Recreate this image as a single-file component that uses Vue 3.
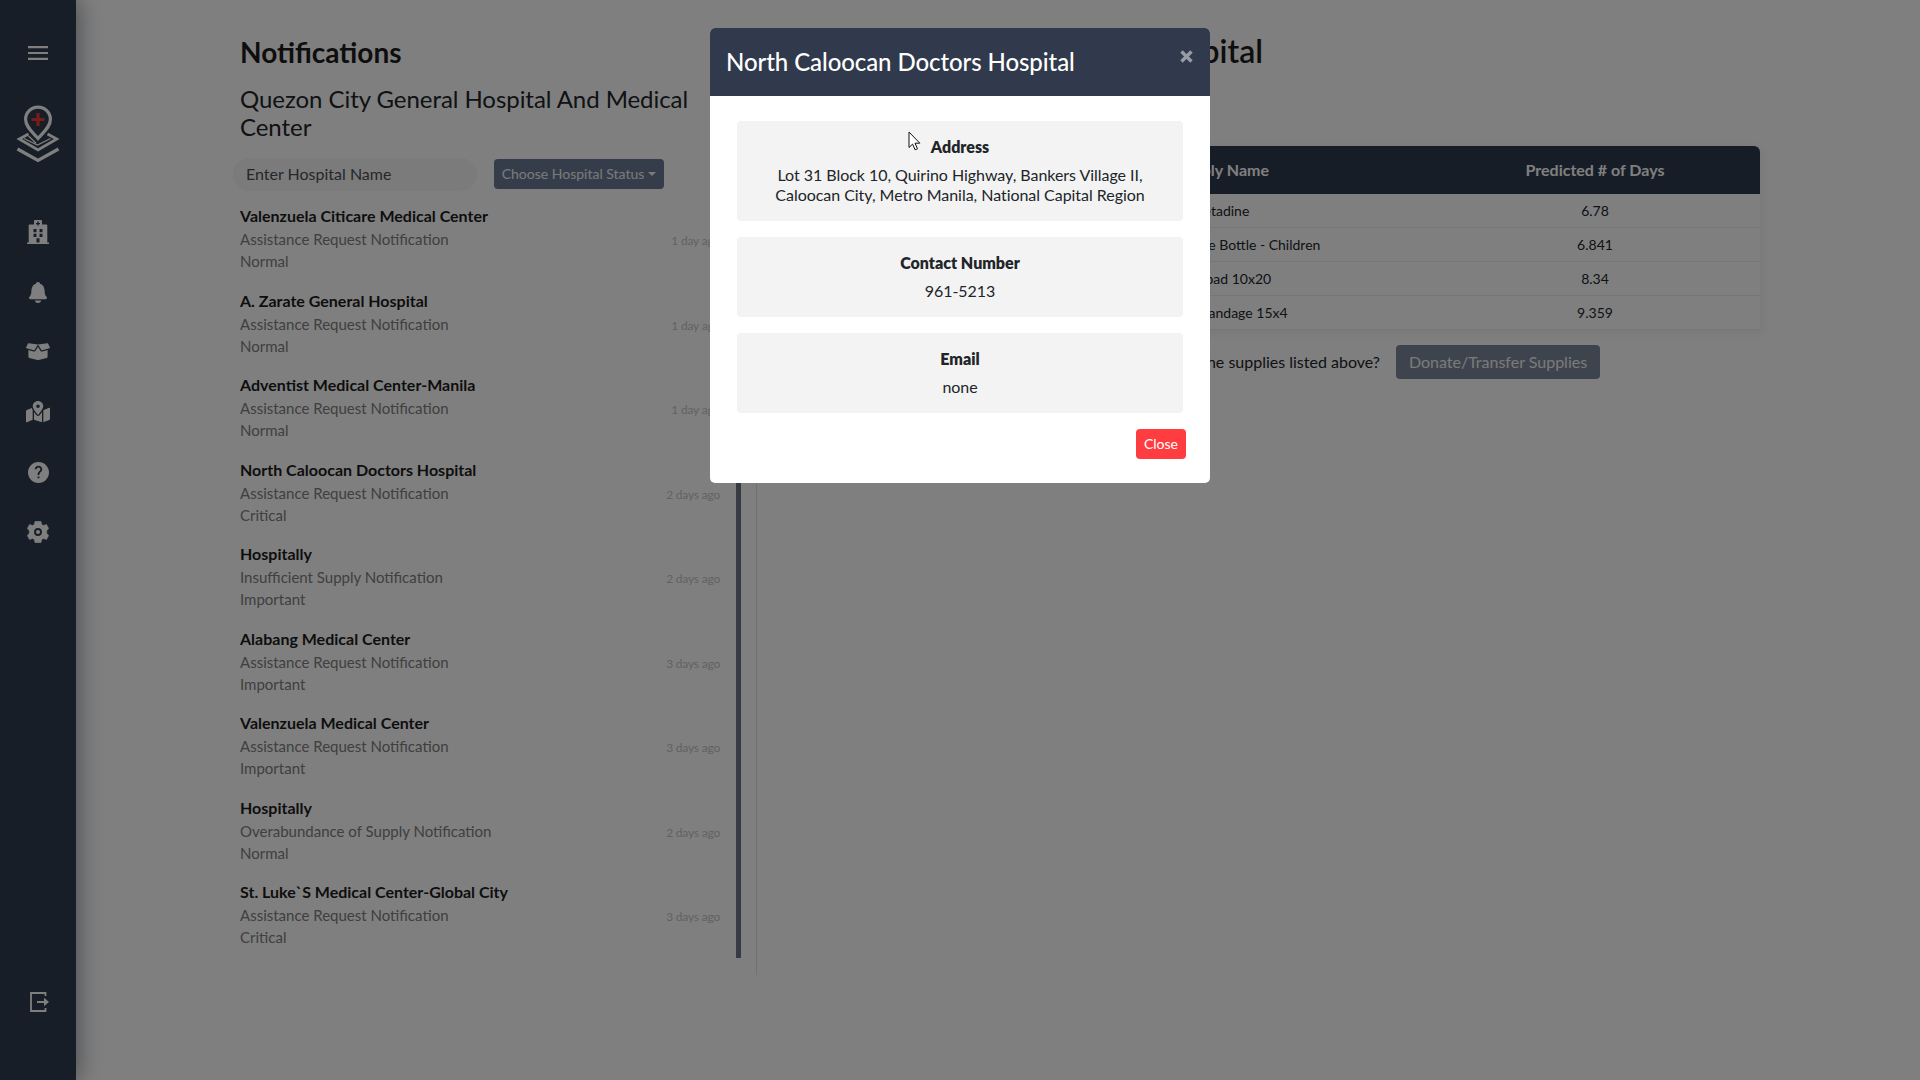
<script setup>
const notifications = [
  { name: 'Valenzuela Citicare Medical Center', type: 'Assistance Request Notification', level: 'Normal', time: '1 day ago' },
  { name: 'A. Zarate General Hospital', type: 'Assistance Request Notification', level: 'Normal', time: '1 day ago' },
  { name: 'Adventist Medical Center-Manila', type: 'Assistance Request Notification', level: 'Normal', time: '1 day ago' },
  { name: 'North Caloocan Doctors Hospital', type: 'Assistance Request Notification', level: 'Critical', time: '2 days ago' },
  { name: 'Hospitally', type: 'Insufficient Supply Notification', level: 'Important', time: '2 days ago' },
  { name: 'Alabang Medical Center', type: 'Assistance Request Notification', level: 'Important', time: '3 days ago' },
  { name: 'Valenzuela Medical Center', type: 'Assistance Request Notification', level: 'Important', time: '3 days ago' },
  { name: 'Hospitally', type: 'Overabundance of Supply Notification', level: 'Normal', time: '2 days ago' },
  { name: 'St. Luke`S Medical Center-Global City', type: 'Assistance Request Notification', level: 'Critical', time: '3 days ago' },
]
const supplies = [
  { name: 'Betadine', days: '6.78' },
  { name: 'Plasma Culture Bottle - Children', days: '6.841' },
  { name: 'ABD pad 10x20', days: '8.34' },
  { name: 'Elastic Bandage 15x4', days: '9.359' },
]
const details = [
  { title: 'Address', lines: ['Lot 31 Block 10, Quirino Highway, Bankers Village II,', 'Caloocan City, Metro Manila, National Capital Region'] },
  { title: 'Contact Number', lines: ['961-5213'] },
  { title: 'Email', lines: ['none'] },
]
</script>

<template>
  <div class="app">
    <nav class="sidebar">
      <div class="slot menu">
        <svg width="20" height="14" viewBox="0 0 20 14"><path d="M0 1.200h20M0 7h20M0 12.800h20" stroke="currentColor" stroke-width="2.200" /></svg>
      </div>
      <div class="slot logo">
        <svg width="44" height="58" viewBox="0 0 44 58" fill="none" stroke="currentColor" stroke-width="3.200">
          <path d="M22 33.500C17 27.500 9.600 22 9.600 14.500a12.400 12.400 0 0 1 24.800 0C34.400 22 27 27.500 22 33.500z" />
          <path d="M12.500 29L3.300 34 22 45l18.700-11-9.200-5" stroke-width="2.800" />
          <path d="M8 33.500l13.500 6.500 13-6.500M12.500 31l7.500 7" stroke-width="1.300" />
          <path d="M1.500 44L22 55.500 42.500 44" />
          <path d="M22 8v13M15.500 14.500h13" stroke="#ee3a34" stroke-width="3.200" />
        </svg>
      </div>
      <div class="slot">
        <svg width="22" height="24" viewBox="0 0 22 24" fill="currentColor" fill-rule="evenodd"><path d="M8 0h6q1 0 1 1v3.500h4.500q.8 0 .8.800V22.500H22V24H0v-1.500h1.700V5.300q0-.8.8-.8H7V1q0-1 1-1zm2.300 1.600v1.300H9v1.400h1.300v1.300h1.400V4.300H13V2.900h-1.300V1.600zM6.500 9v3.200h3V9zm6 0v3.200h3V9zm-6 4.700v3.200h3v-3.200zm6 0v3.200h3v-3.200zm-3 4.600v4.200h3v-4.200z" /></svg>
      </div>
      <div class="slot">
        <svg width="18" height="21" viewBox="0 0 18 21" fill="currentColor"><path d="M9 0c1.300 0 2 .8 2.100 1.700C14.300 2.700 15.500 5.500 15.600 9c.1 3.500.8 4.700 2.100 6 .7.800.2 2.200-1 2.200H1.300c-1.200 0-1.700-1.400-1-2.200C1.600 13.700 2.300 12.500 2.400 9 2.500 5.500 3.700 2.700 6.900 1.700 7 .8 7.700 0 9 0zM5.800 18.500h6.400C11.800 20.200 10.500 21 9 21s-2.800-.8-3.200-2.500z" /></svg>
      </div>
      <div class="slot">
        <svg width="24" height="19.200" viewBox="0 0 640 512" fill="currentColor"><path d="M425.700 256c-16.900 0-32.800-9-41.400-23.400L320 126l-64.200 106.600c-8.700 14.500-24.600 23.500-41.500 23.500-4.500 0-9-.6-13.300-1.900L64 215v178c0 14.700 10 27.500 24.200 31l216.200 54.100c10.200 2.500 20.900 2.500 31 0L551.800 424c14.200-3.600 24.200-16.400 24.200-31V215l-137 39.100c-4.300 1.300-8.800 1.900-13.300 1.900zm212.600-112.200L586.800 41c-3.100-6.200-9.800-9.800-16.700-8.900L320 64l91.700 152.100c3.800 6.300 11.400 9.300 18.500 7.300l197.900-56.500c9.900-2.900 14.700-13.900 10.200-23.100zM53.200 41L1.700 143.800c-4.600 9.200.3 20.200 10.100 23l197.900 56.500c7.100 2 14.700-1 18.500-7.300L320 64 69.800 32.100c-6.900-.8-13.500 2.700-16.600 8.900z" /></svg>
      </div>
      <div class="slot">
        <svg width="24" height="21.400" viewBox="0 0 576 512" fill="currentColor"><path d="M288 0c-69.590 0-126 56.410-126 126 0 56.260 82.350 158.800 113.900 196.020 6.390 7.540 17.820 7.540 24.200 0C331.650 284.800 414 182.260 414 126 414 56.410 357.590 0 288 0zm0 168c-23.200 0-42-18.800-42-42s18.800-42 42-42 42 18.800 42 42-18.800 42-42 42zM20.120 215.950A32.006 32.006 0 0 0 0 245.660v250.320c0 11.320 11.430 19.060 21.940 14.860L160 448V214.920c-8.840-15.980-16.070-31.540-21.250-46.420L20.120 215.950zM288 359.670c-14.070 0-27.380-6.180-36.510-16.960-19.660-23.200-40.570-49.620-59.490-76.720v182l192 64V266c-18.920 27.090-39.820 53.520-59.490 76.720-9.130 10.770-22.440 16.950-36.510 16.950zm266.060-198.510L416 224v288l139.880-55.950A31.996 31.996 0 0 0 576 426.340V176.020c0-11.320-11.430-19.060-21.940-14.860z" /></svg>
      </div>
      <div class="slot">
        <svg width="21" height="21" viewBox="2 2 20 20" fill="currentColor"><path d="M12 2C6.480 2 2 6.480 2 12s4.480 10 10 10 10-4.480 10-10S17.520 2 12 2zm.9 15.500h-1.800v-1.800h1.800v1.800zm1.870-6.550l-.8.820C13.250 12.500 12.900 13.100 12.900 14.300h-1.800v-.5c0-1 .4-1.900 1.050-2.550l1.150-1.150c.35-.34.5-.7.5-1.200 0-1-.8-1.700-1.800-1.700s-1.800.8-1.800 1.800H8.400c0-2 1.600-3.500 3.600-3.500s3.600 1.500 3.600 3.500c0 .8-.3 1.400-.83 1.950z" /></svg>
      </div>
      <div class="slot">
        <svg width="22" height="22" viewBox="0 0 22 22" fill="currentColor"><path d="M8 .3h6l.7 3.100 1.800 1 3-1 2.200 4.100-2 2.200v2.600l2 2.200-2.200 4.100-3-1-1.800 1-.7 3.100H8l-.7-3.100-1.800-1-3 1L.3 14.500l2-2.200V9.700l-2-2.200 2.200-4.100 3 1 1.800-1z" stroke="currentColor" stroke-width=".5" stroke-linejoin="round" /><circle class="cut" cx="11" cy="11" r="3" /></svg>
      </div>
      <div class="slot logout">
        <svg width="19" height="20" viewBox="0 0 19 20" fill="none" stroke="currentColor" stroke-width="1.800"><path d="M15.500 4V1H1v18h14.500v-3M7 10h8" /><path d="M14 5.800L19 10l-5 4.200z" fill="currentColor" stroke="none" /></svg>
      </div>
    </nav>

    <section class="left">
      <h3>Notifications</h3>
      <h4>Quezon City General Hospital And Medical Center</h4>
      <div class="filters">
        <div class="search">Enter Hospital Name</div>
        <div class="btn status">Choose Hospital Status<i class="caret"></i></div>
      </div>
      <div class="list">
        <div class="items">
          <article v-for="(n, i) in notifications" :key="i" class="item">
            <div>
              <b>{{ n.name }}</b>
              <p>{{ n.type }}</p>
              <p>{{ n.level }}</p>
            </div>
            <time>{{ n.time }}</time>
          </article>
        </div>
        <div class="thumb"></div>
      </div>
    </section>

    <section class="right">
      <h3>Hospital</h3>
      <div class="table">
        <div class="row head"><span></span><span>Supply Name</span><span>Predicted # of Days</span></div>
        <div v-for="(s, i) in supplies" :key="s.name" class="row"><span>{{ i + 1 }}</span><span>{{ s.name }}</span><span>{{ s.days }}</span></div>
      </div>
      <div class="ask">
        <span>Donate the supplies listed above?</span>
        <div class="btn donate">Donate/Transfer Supplies</div>
      </div>
    </section>

    <div class="backdrop">
      <div class="modal">
        <header>
          <h5>North Caloocan Doctors Hospital</h5>
          <svg width="13" height="13" viewBox="0 0 13 13"><path d="M1.500 1.500l10 10M11.500 1.500l-10 10" stroke="#979ca5" stroke-width="3.400" /></svg>
        </header>
        <div class="body">
          <div v-for="d in details" :key="d.title" class="card">
            <b>{{ d.title }}</b>
            <p v-for="l in d.lines" :key="l">{{ l }}</p>
          </div>
          <div class="btn close">Close</div>
        </div>
      </div>
    </div>
    <svg class="cursor" width="13" height="20" viewBox="0 0 13 20"><path d="M1 1v15.500l3.600-3.400 2.500 5.700 2.400-1-2.500-5.600h4.800z" fill="#fff" stroke="#111" stroke-width="1" /></svg>
  </div>
</template>

<style>
body { margin: 0; background: #808080; }
</style>

<style scoped>
.app { position: relative; display: flex; width: 1920px; height: 1080px; overflow: hidden; background: #fff; color: #212529; font: 16px/20px Lato, sans-serif; }
h3, h4, h5, p { margin: 0; }
.sidebar { width: 76px; flex: none; display: flex; flex-direction: column; background: #303d4f; color: #fff; box-shadow: 2px 0 22px rgba(40, 48, 66, .5); }
.slot { height: 60px; display: flex; align-items: center; justify-content: center; flex: none; }
.menu { margin-top: 23px; }
.logo { height: 58px; margin: 22px 0 39px; }
.logout { margin-top: 410px; padding-left: 3px; }
.cut { fill: none; stroke: #303d4f; stroke-width: 1.900; }
.left { width: 516px; margin: 35px 0 0 164px; flex: none; height: 940px; border-right: 1px solid #dfe2e6; }
.left h3 { font-size: 28px; line-height: 34px; font-weight: 700; color: #1c1c1c; }
.left h4 { margin-top: 16px; font-size: 24px; line-height: 28px; font-weight: 400; width: 470px; letter-spacing: -.055px; }
.filters { display: flex; margin: 17px 0 0 -7px; height: 32px; align-items: center; }
.search { width: 244px; height: 33px; line-height: 32px; border-radius: 16px; background: #f7f7f7; box-sizing: border-box; padding-left: 13px; color: #495057; }
.btn { border-radius: 4px; text-align: center; color: #fff; }
.status { width: 170px; height: 30px; line-height: 30px; margin-left: 17px; font-size: 14px; background: #6b7a94; color: #f4f4f4; }
.caret { display: inline-block; margin-left: 4px; vertical-align: 3px; border: 4px solid transparent; border-top-color: #f4f4f4; border-bottom: 0; }
.list { display: flex; height: 756px; margin-top: 12px; }
.items { width: 480px; }
.item { height: 84.500px; display: flex; justify-content: space-between; }
.item b { display: block; height: 26px; line-height: 28px; font-weight: 700; color: #1c1c1c; }
.item p { height: 22px; line-height: 22px; font-size: 15px; color: #808080; }
.item time { margin-top: 29px; line-height: 20px; font-size: 12px; letter-spacing: -.2px; color: #c4c4c4; }
.thumb { width: 5px; margin-left: 16px; background: #6c7686; }
.right { width: 988px; margin-left: 15px; padding-top: 34px; }
.right h3 { width: 491px; text-align: right; white-space: nowrap; font-size: 32px; line-height: 34px; font-weight: 600; color: #1c1c1c; }
.table { margin-top: 78px; border-radius: 6px 6px 0 0; box-shadow: 2px 2px 12px rgba(0, 0, 0, .07); }
.row { display: grid; grid-template-columns: 242px 416px 330px; height: 33px; line-height: 33px; border-bottom: 1px solid #eaecee; text-align: center; font-size: 14px; }
.head { height: 48px; line-height: 48px; border: 0; border-radius: 6px 6px 0 0; background: #2f3a4c; color: #fff; font-weight: 700; font-size: 16px; }
.ask { display: flex; width: 828px; margin-top: 15px; justify-content: flex-end; align-items: center; gap: 16px; }
.donate { width: 204px; height: 34px; line-height: 34px; background: #7d899d; color: #f4f4f4; }
.backdrop { position: absolute; inset: 0; background: rgba(0, 0, 0, .5); display: flex; justify-content: center; align-items: flex-start; }
.modal { width: 500px; height: 455px; margin-top: 28px; border-radius: 5px; background: #fff; overflow: hidden; }
.modal header { height: 68px; box-sizing: border-box; padding: 0 17px 0 16px; display: flex; justify-content: space-between; background: #303a4c; }
.modal h5 { font-size: 24px; line-height: 67px; font-weight: 500; letter-spacing: -.08px; color: #fff; }
.modal header svg { margin-top: 22px; }
.body { padding: 25px 27px 0; }
.card { box-sizing: border-box; margin-bottom: 16px; padding: 15px 0 16px; border-radius: 4px; background: #f3f3f3; text-align: center; letter-spacing: -.04px; }
.card b { display: block; line-height: 21px; margin-bottom: 8px; font-weight: 800; letter-spacing: 0; }
.close { width: 50px; height: 30px; line-height: 30px; margin: 0 -3px 0 auto; font-size: 14px; background: #ff3d41; }
.cursor { position: absolute; left: 908px; top: 131px; }
</style>
